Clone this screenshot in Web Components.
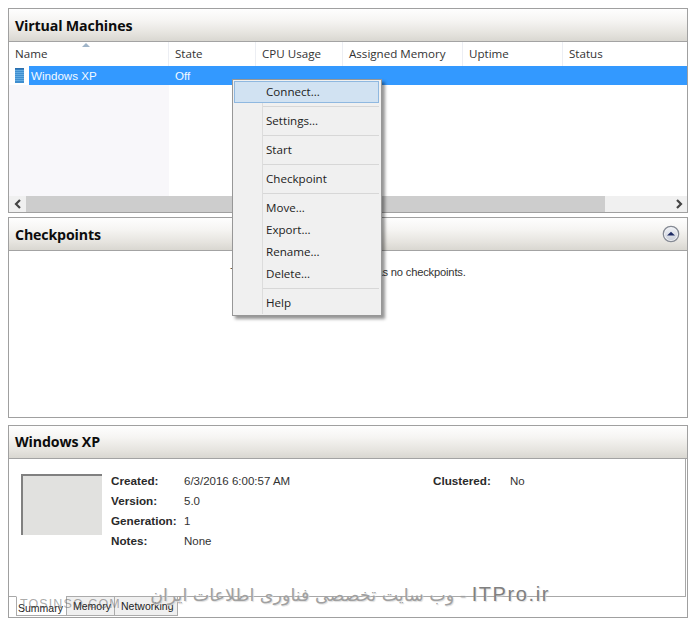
<!DOCTYPE html>
<html><head><meta charset="utf-8">
<style>
html,body{margin:0;background:#fff}
body{padding:8px;font-family:"Open Sans","Liberation Sans",sans-serif;color:#222}
</style></head><body>
<vm-app>
  <vm-panel title="Virtual Machines" style="height:205px;--pt:3px">
    <vm-list></vm-list>
  </vm-panel>
  <vm-panel title="Checkpoints" collapse style="height:201px;margin-top:4px;--pt:3px">
    <vm-empty>The selected virtual machine has no checkpoints.</vm-empty>
  </vm-panel>
  <vm-panel title="Windows XP" style="height:193px;margin-top:7px;--pt:1px">
    <vm-details></vm-details>
  </vm-panel>
  <vm-menu></vm-menu>
  <vm-watermark></vm-watermark>
</vm-app>
<script>
function def(name,html,init){
  customElements.define(name,class extends HTMLElement{
    constructor(){super();const r=this.attachShadow({mode:'open'});r.innerHTML=html;}
    connectedCallback(){ if(init) init(this); }
  });
}
def('vm-app',`<style>:host{display:block;position:relative;width:680px}</style><slot></slot>`);

def('vm-panel',`<style>
:host{display:flex;flex-direction:column;box-sizing:border-box;border:1px solid #a0a0a0;background:#fff}
header{flex:none;box-sizing:border-box;height:33px;display:flex;align-items:center;justify-content:space-between;padding:0 6px;
 border-bottom:1px solid #a3a3a3;background:linear-gradient(#fefefe 0,#f6f5f3 35%,#e6e4df 75%,#d9d7d1 100%);}
h2{margin:0;padding-top:var(--pt,1px);font:700 14.2px/1 "Open Sans","Liberation Sans",sans-serif;color:#0c0c0c;letter-spacing:-.15px}
svg{display:none;margin:0 1px 1px 0}
:host([collapse]) svg{display:block}
.b{flex:1;min-height:0;display:flex;flex-direction:column}
</style><header><h2></h2>
<svg width="18" height="18" viewBox="0 0 18 18"><defs><linearGradient id="g" x1="0" y1="0" x2="0" y2="1"><stop offset="0" stop-color="#eef0f5"/><stop offset="1" stop-color="#cdd2dc"/></linearGradient></defs>
<circle cx="9" cy="9" r="7.7" fill="#f4f5f8" stroke="#858a94" stroke-width="1.3"/><circle cx="9" cy="9" r="6.2" fill="url(#g)"/><path d="M5 10.6 L9 6.8 L13 10.6 Z" fill="#1c2a63"/></svg>
</header><div class="b"><slot></slot></div>`,el=>{el.shadowRoot.querySelector('h2').textContent=el.getAttribute('title');el.removeAttribute('title');});

def('vm-list',`<style>
:host{display:flex;flex-direction:column;flex:1;min-height:0;font:400 11.6px/1 "Open Sans","Liberation Sans",sans-serif;color:#333}
.cols,.row{display:grid;grid-template-columns:160px 87px 87px 120px 100px 1fr}
.cols{height:24px;box-sizing:border-box;align-items:center}
.cols span{position:relative;height:100%;display:flex;align-items:center;padding-left:6px;border-right:1px solid #eceef3;box-sizing:border-box}
.cols span:last-child{border-right:0}
.sort{position:absolute;left:73px;top:1px;width:0;height:0;border:4px solid transparent;border-top:0;border-bottom:4px solid #9fb4c8}
.row{height:19px;align-items:center;font:400 11.6px/1 "Liberation Sans",sans-serif}
.row>div{height:100%}
.ic{height:100%;display:flex;align-items:center;padding-left:6px;box-sizing:border-box;background:#fff;width:20px}
.first{display:flex}
.first b{font-weight:400;flex:1;background:#3399ff;display:flex;align-items:center;padding-left:2px;color:#f4f9ff}
.rest{background:#3399ff;display:flex;align-items:center;padding-left:6px;color:#f4f9ff}
.fill{flex:1;min-height:0;display:grid;grid-template-columns:160px 1fr}
.fill i{background:#f8f7fa}
.sb{height:16px;display:flex;background:#f0f0f0;align-items:stretch}
.btn{width:17px;display:flex;align-items:center;justify-content:center}
.thumb{width:579px;background:#cdcdcd}
.tr{flex:1}
</style>
<div class="cols"><span>Name<em class="sort"></em></span><span>State</span><span>CPU Usage</span><span>Assigned Memory</span><span>Uptime</span><span>Status</span></div>
<div class="row"><div class="first"><div class="ic"><svg width="9" height="15" viewBox="0 0 9 15"><rect width="9" height="15" fill="#3f8fd0"/><path d="M0 2.5h9M0 4.5h9M0 6.5h9M0 8.5h9M0 10.5h9M0 12.5h9" stroke="#6db4e6" stroke-width=".8"/><rect x="0" y="0" width="9" height="1.5" fill="#2a6fae"/></svg></div><b>Windows XP</b></div><div class="rest">Off</div><div class="rest"></div><div class="rest"></div><div class="rest"></div><div class="rest"></div></div>
<div class="fill"><i></i><span></span></div>
<div class="sb"><div class="btn"><svg width="8" height="10" viewBox="0 0 8 10"><path d="M6 1 L2 5 L6 9" fill="none" stroke="#444" stroke-width="2.2"/></svg></div><div class="thumb"></div><div class="tr"></div><div class="btn"><svg width="8" height="10" viewBox="0 0 8 10"><path d="M2 1 L6 5 L2 9" fill="none" stroke="#444" stroke-width="2.2"/></svg></div></div>`);

def('vm-empty',`<style>:host{display:block;text-align:center;padding-top:14px;font:400 11.2px/14px "Liberation Sans",sans-serif;color:#333;letter-spacing:-.19px}</style><slot></slot>`);

def('vm-details',`<style>
:host{display:flex;flex-direction:column;flex:1;min-height:0;font:400 11.5px/14px "Liberation Sans",sans-serif;color:#333}
.pane{flex:1;box-sizing:border-box;margin:0 1px 0 0;border-right:1px solid #a8a8a8;border-bottom:1px solid #a8a8a8;display:flex;padding:15px 0 0 12px;align-items:flex-start}
.th{width:81px;height:61px;box-sizing:border-box;background:#e1e1df;border-top:2px solid #808080;border-left:2px solid #808080;flex:none}
.g{display:grid;grid-template-columns:73px 249px 77px auto;grid-auto-rows:20px;margin:0 0 0 9px}
.g b{font-weight:700;color:#2a2a2a;font-size:11.7px}
.g span,.g b{line-height:14px}
.tabs{display:flex;height:20px;flex:none;padding-left:8px;margin-bottom:1px;margin-top:-1px;font-size:10.5px}
.t{box-sizing:border-box;border:1px solid #ababab;display:flex;align-items:flex-start;padding:2px 0 0 6px;background:#f0f0f0;color:#222;margin-left:-1px}
.t.a{background:#fff;border-top-color:#fff;padding:4px 0 0 1px}
</style>
<div class="pane"><div class="th"></div><div class="g">
<b>Created:</b><span>6/3/2016 6:00:57 AM</span><b>Clustered:</b><span>No</span>
<b>Version:</b><span>5.0</span><span></span><span></span>
<b>Generation:</b><span>1</span><span></span><span></span>
<b>Notes:</b><span>None</span><span></span><span></span>
</div></div>
<div class="tabs"><div class="t a" style="width:51px">Summary</div><div class="t" style="width:49px">Memory</div><div class="t" style="width:64px">Networking</div></div>`);

def('vm-menu-item',`<style>
:host{display:flex;height:22px;align-items:center;box-sizing:border-box;padding:0 0 2px 31px;margin:0 2px 0 1px;border:1px solid transparent;font-size:11.6px;color:#222}
:host([hot]){background:#d1e2f2;border-color:#8fb8e0}
</style><slot></slot>`);
def('vm-menu-sep',`<style>:host{display:block;height:1px;margin:3px 2px 3px 30px;background:#d7d7d7}</style>`);
def('vm-menu',`<style>
:host{position:absolute;left:224px;top:71px;width:150px;box-sizing:border-box;border:1px solid #979797;background:#f0f0f0;box-shadow:3px 3px 3px rgba(0,0,0,.42);padding:1px 0 1px;font-family:"Open Sans","Liberation Sans",sans-serif}
.gut{position:absolute;left:29px;top:1px;bottom:1px;width:1px;background:#dcdcdc}
.w{position:relative}
</style><div class="gut"></div><div class="w">
<vm-menu-item hot>Connect...</vm-menu-item><vm-menu-sep></vm-menu-sep>
<vm-menu-item>Settings...</vm-menu-item><vm-menu-sep></vm-menu-sep>
<vm-menu-item>Start</vm-menu-item><vm-menu-sep></vm-menu-sep>
<vm-menu-item>Checkpoint</vm-menu-item><vm-menu-sep></vm-menu-sep>
<vm-menu-item>Move...</vm-menu-item><vm-menu-item>Export...</vm-menu-item><vm-menu-item>Rename...</vm-menu-item><vm-menu-item>Delete...</vm-menu-item><vm-menu-sep></vm-menu-sep>
<vm-menu-item>Help</vm-menu-item></div>`);

def('vm-watermark',`<style>
:host{display:block;position:absolute;left:0;top:0;width:680px;height:610px;pointer-events:none}
.a{position:absolute;left:12px;top:590px;font:400 12.5px/1 "Liberation Sans",sans-serif;letter-spacing:1.1px;color:rgba(100,100,100,.55);white-space:nowrap}
.b{position:absolute;left:142px;top:576px;width:400px;direction:rtl;font:400 17.5px/1.2 "DejaVu Sans",sans-serif;color:#a0a0a0;text-shadow:1px 1px 1px #ddd;white-space:nowrap}
.b span{font:400 20px/1 "Liberation Sans",sans-serif;letter-spacing:1.6px;color:#808080}
</style><div class="a">TOSINSO.COM</div><div class="b"><span dir="ltr">ITPro.ir</span> - وب سایت تخصصی فناوری اطلاعات ایران</div>`);
</script>
</body></html>
